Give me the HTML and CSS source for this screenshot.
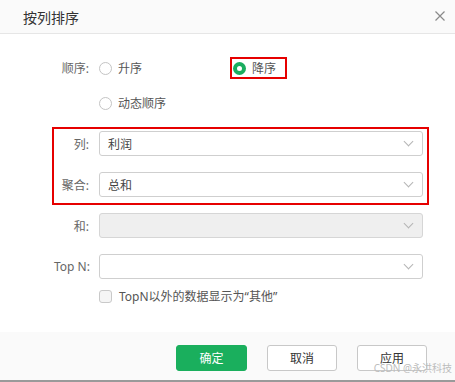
FILE: index.html
```html
<!DOCTYPE html>
<html lang="zh-CN">
<head>
  <meta charset="UTF-8" />
  <title>按列排序</title>
  <link rel="stylesheet" href="styles.css">
</head>
<body>
  <div class="dialog">
    <div class="header">
      <span class="title">按列排序</span>
      <svg class="close" width="10" height="10" viewBox="0 0 10 10">
        <path d="M0.5 0.5 L9.5 9.5 M9.5 0.5 L0.5 9.5" stroke="#8a8a8a" stroke-width="1.2" fill="none"/>
      </svg>
    </div>

    <div class="content">
      <div class="row radio-row first">
        <span class="label">顺序:</span>
        <div class="radios">
          <label class="option wide"><span class="radio"></span>升序</label>
          <label class="option marked"><span class="radio checked"></span>降序</label>
        </div>
      </div>
      <div class="row radio-row second">
        <span class="label"></span>
        <label class="option"><span class="radio"></span>动态顺序</label>
      </div>

      <div class="group">
        <div class="row">
          <span class="label">列:</span>
          <div class="select">利润<span class="arrow"></span></div>
        </div>
        <div class="row">
          <span class="label">聚合:</span>
          <div class="select">总和<span class="arrow"></span></div>
        </div>
      </div>

      <div class="row after-group">
        <span class="label">和:</span>
        <div class="select disabled"><span class="arrow"></span></div>
      </div>
      <div class="row">
        <span class="label">Top N:</span>
        <div class="select"><span class="arrow"></span></div>
      </div>
      <div class="row check-row">
        <span class="label"></span>
        <label class="option"><span class="checkbox"></span>TopN以外的数据显示为“其他”</label>
      </div>
    </div>

    <div class="footer">
      <button class="btn primary">确定</button>
      <button class="btn">取消</button>
      <button class="btn">应用</button>
      <span class="watermark">CSDN @永洪科技</span>
    </div>
  </div>
</body>
</html>
```

FILE: styles.css
```css
body {
  margin: 0;
  font-family: "Noto Sans", "Noto Sans CJK SC", sans-serif;
  font-size: 12px;
  color: #555;
  background-color: #fff;
}

.dialog {
  width: 455px;
  height: 382px;
  display: flex;
  flex-direction: column;
}

.header {
  height: 33px;
  background-color: #fafafa;
  border-bottom: 1px solid #e6e6e6;
  display: flex;
  align-items: center;
  justify-content: space-between;
  padding: 0 10px 0 23px;
}

.title {
  font-size: 14px;
  color: #333;
}

.close {
  margin-top: -2px;
}

.content {
  flex: 1;
  padding: 24px 0 0 54px;
}

.row {
  display: flex;
  align-items: center;
  gap: 10px;
  height: 25px;
}

.row + .row {
  margin-top: 16px;
}

.label {
  width: 35px;
  flex-shrink: 0;
  text-align: right;
  color: #666;
  white-space: nowrap;
}

.radio-row {
  height: 20px;
}

.row.second {
  margin-top: 15px;
}

.radios {
  display: flex;
  align-items: center;
}

.option {
  display: flex;
  align-items: center;
  gap: 6px;
  color: #555;
}

.option.wide {
  width: 131px;
}

.option.marked {
  border: 2px solid #e60000;
  height: 18px;
  padding: 0 9px 0 1px;
}

.radio {
  width: 11px;
  height: 11px;
  border: 1px solid #c4c4c4;
  border-radius: 50%;
  background-color: #fff;
}

.radio.checked {
  width: 5px;
  height: 5px;
  border: 4px solid #1aad5f;
}

.group {
  width: 369px;
  margin: 14px 0 0 -2px;
  padding: 2px 4px 6px 0;
  border: 2px solid #e60000;
}

.row.after-group {
  margin-top: 8px;
}

.select {
  width: 324px;
  height: 25px;
  box-sizing: border-box;
  border: 1px solid #cfcfcf;
  border-radius: 3px;
  background-color: #fff;
  padding-left: 8px;
  display: flex;
  align-items: center;
  justify-content: space-between;
  color: #444;
}

.select.disabled {
  background-color: #efefef;
  border-color: #d6d6d6;
}

.arrow {
  width: 6px;
  height: 6px;
  margin: -4px 10px 0 auto;
  border-right: 1px solid #b5b5b5;
  border-bottom: 1px solid #b5b5b5;
  transform: rotate(45deg);
}

.check-row {
  height: 20px;
}

.row.check-row {
  margin-top: 7px;
}

.check-row .option {
  gap: 7px;
}

.checkbox {
  width: 11px;
  height: 11px;
  border: 1px solid #c9c9c9;
  border-radius: 3px;
  background-color: #f5f5f5;
}

.footer {
  position: relative;
  height: 50px;
  background-color: #fafafa;
  border-bottom: 2px solid #9a9a9a;
  display: flex;
  justify-content: flex-end;
  align-items: flex-start;
  gap: 20px;
  padding: 13px 28px 0 0;
  box-sizing: border-box;
}

.btn {
  width: 70px;
  height: 26px;
  border: 1px solid #c8c8c8;
  border-radius: 3px;
  background-color: #fff;
  color: #333;
  font-family: inherit;
  font-size: 12px;
  padding: 0;
  cursor: pointer;
}

.btn.primary {
  width: 71px;
  background-color: #1aaf5d;
  border-color: #1aaf5d;
  color: #fff;
}

.watermark {
  position: absolute;
  right: 3px;
  bottom: 5px;
  font-size: 10px;
  color: #bdbdbd;
  white-space: nowrap;
}
```
